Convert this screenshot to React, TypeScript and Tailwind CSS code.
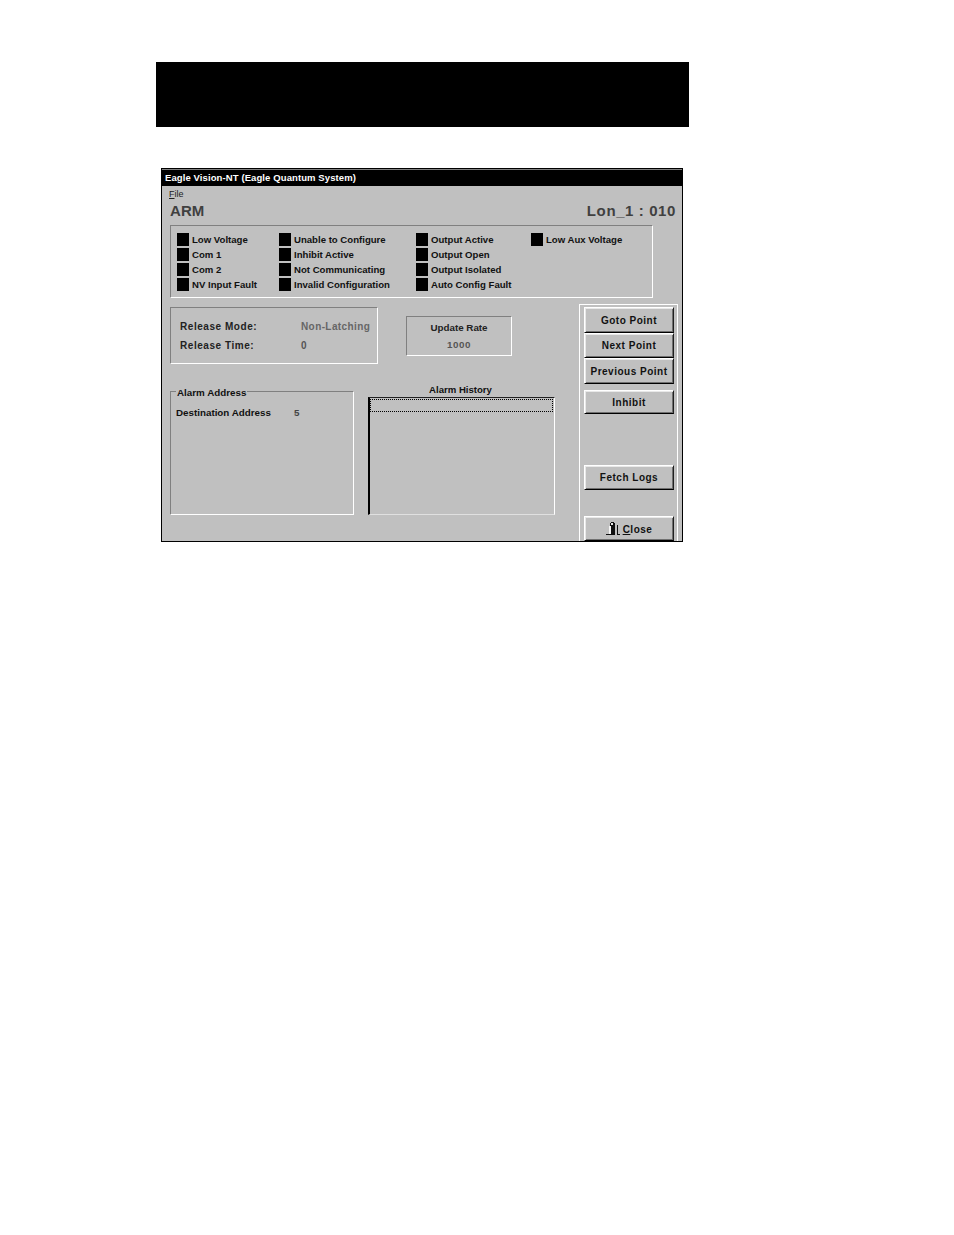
import React from 'react';

const col1 = ['Low Voltage', 'Com 1', 'Com 2', 'NV Input Fault'];
const col2 = ['Unable to Configure', 'Inhibit Active', 'Not Communicating', 'Invalid Configuration'];
const col3 = ['Output Active', 'Output Open', 'Output Isolated', 'Auto Config Fault'];
const col4 = ['Low Aux Voltage'];

const Lamp = ({ label }: { label: string }) => (
  <div className="flex h-[15px] items-center">
    <div className="h-[13px] w-[12px] shrink-0 bg-black" />
    <span className="ml-[3px] whitespace-nowrap text-[9.6px] font-bold leading-none text-[#111]">{label}</span>
  </div>
);

const LampColumn = ({ items, className }: { items: string[]; className: string }) => (
  <div className={className}>
    {items.map((item) => (
      <Lamp key={item} label={item} />
    ))}
  </div>
);

const WinButton = ({ children, className }: { children: React.ReactNode; className: string }) => (
  <div
    className={`flex w-[90px] items-center justify-center border border-t-white border-l-white border-r-[#202020] border-b-black text-[10px] font-bold tracking-[0.5px] text-[#111] shadow-[inset_1px_1px_0_#e8e8e8,inset_-1px_-1px_0_#707070] ${className}`}
  >
    {children}
  </div>
);

export default function App() {
  return (
    <div className="h-[1235px] w-[954px] bg-white pt-[62px] font-['Liberation_Sans',Arial,sans-serif]">
      <div className="ml-[156px] h-[65px] w-[533px] bg-black" />

      {/* Window */}
      <div className="ml-[161px] mt-[41px] h-[374px] w-[522px] border border-black bg-[#c0c0c0]">
        <div className="h-[17px] border-t border-t-[#808080] bg-black pl-[3px] pt-[1px] text-[9.5px] font-bold leading-[13px] tracking-[0.1px] text-white">
          Eagle Vision-NT (Eagle Quantum System)
        </div>

        <div className="pl-[7px] pt-[3px] text-[9px] leading-[11px] text-[#222]">
          <span className="underline">F</span>ile
        </div>

        <div className="mt-[1px] flex items-start justify-between pl-[8px] pr-[6px] text-[#404040]">
          <span className="text-[15px] font-bold leading-[19px] tracking-[0.1px]">ARM</span>
          <span className="text-[15px] font-bold leading-[19px] tracking-[0.6px]">Lon_1 : 010</span>
        </div>

        {/* Status lamps */}
        <div className="ml-[8px] mt-[5px] flex h-[73px] w-[483px] border border-t-[#808080] border-l-[#808080] border-r-white border-b-white pl-[6px] pt-[6px]">
          <LampColumn items={col1} className="w-[102px]" />
          <LampColumn items={col2} className="w-[137px]" />
          <LampColumn items={col3} className="w-[115px]" />
          <LampColumn items={col4} className="w-[100px]" />
        </div>

        <div className="mt-[6px] flex items-start">
          <div className="w-[417px] pl-[8px]">
            <div className="mt-[3px] flex items-start">
              {/* Release info */}
              <div className="h-[57px] w-[208px] border border-t-[#808080] border-l-[#808080] border-r-white border-b-white pl-[9px] pt-[12px] text-[10px] font-bold tracking-[0.55px]">
                <div className="flex h-[19px] items-start leading-[13px] text-[#222]">
                  <span className="w-[121px]">Release Mode:</span>
                  <span className="tracking-[0.4px] text-[#666]">Non-Latching</span>
                </div>
                <div className="flex items-start leading-[13px] text-[#222]">
                  <span className="w-[121px]">Release Time:</span>
                  <span className="text-[#555]">0</span>
                </div>
              </div>

              {/* Update rate */}
              <div className="ml-[28px] mt-[9px] h-[40px] w-[106px] border border-t-[#808080] border-l-[#808080] border-r-white border-b-white pt-[2px] text-center text-[9.8px] font-bold leading-[17px]">
                <div className="text-[#222]">Update Rate</div>
                <div className="tracking-[0.5px] text-[#555]">1000</div>
              </div>
            </div>

            <div className="mt-[20px] flex items-start">
              {/* Alarm address */}
              <div className="relative mt-[7px] h-[124px] w-[184px] border border-t-[#808080] border-l-[#808080] border-r-white border-b-white pl-[5px] pt-[14px] text-[9.8px] font-bold leading-[13px] text-[#111]">
                <span className="absolute left-[5px] top-[-6px] bg-[#c0c0c0] px-px">Alarm Address</span>
                <div className="flex">
                  <span className="w-[118px]">Destination Address</span>
                  <span className="text-[#444]">5</span>
                </div>
              </div>

              {/* Alarm history */}
              <div className="ml-[14px] w-[187px]">
                <div className="h-[13px] pr-[2px] text-center text-[9.6px] font-bold leading-[11px] text-[#111]">Alarm History</div>
                <div className="h-[118px] border border-t-[#202020] border-l-2 border-l-black border-r-white border-b-[#e0e0e0] pt-px pr-px">
                  <div className="h-[13px] border border-dotted border-black" />
                </div>
              </div>
            </div>
          </div>

          {/* Button panel */}
          <div className="h-[237px] w-[99px] border border-t-white border-l-white border-r-white border-b-0 pl-[4px] pt-[2px]">
            <WinButton className="h-[26px]">Goto Point</WinButton>
            <WinButton className="h-[25px]">Next Point</WinButton>
            <WinButton className="h-[26px]">Previous Point</WinButton>
            <WinButton className="mt-[6px] h-[24px]">Inhibit</WinButton>
            <WinButton className="mt-[51px] h-[25px]">Fetch Logs</WinButton>
            <WinButton className="mt-[26px] h-[25px] pt-px">
              <svg width="14" height="14" viewBox="0 0 14 14" className="mr-[3px]">
                <path d="M5 0h3v1h1v3H4V1h1z" fill="#111" />
                <path d="M5 1h2v2H5z" fill="#e8e8e8" />
                <path d="M3 4h2v8H3z" fill="#f4f4f4" />
                <path d="M5 4h4v9H5z" fill="#111" />
                <path d="M0 12h9v1H0z" fill="#111" />
                <path d="M11 3h1v9h2v1h-3z" fill="#111" />
              </svg>
              <span>
                <span className="underline">C</span>lose
              </span>
            </WinButton>
          </div>
        </div>
      </div>
    </div>
  );
}
